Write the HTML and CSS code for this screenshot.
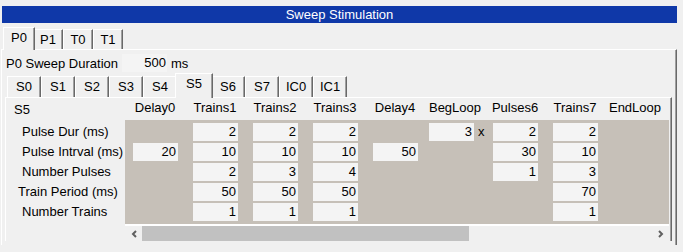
FILE: index.html
```html
<!DOCTYPE html>
<html>
<head>
<meta charset="utf-8">
<link rel="stylesheet" href="styles.css">
</head>
<body>
<div class="titlebar">Sweep Stimulation</div>
<div class="tabs ptabs">
  <div class="tab sel">P0</div>
  <div class="tab">P1</div>
  <div class="tab">T0</div>
  <div class="tab">T1</div>
</div>
<div class="ppanel">
  <div class="durrow">
    <span class="durlabel">P0 Sweep Duration</span>
    <span class="durbox">500</span>
    <span class="unit">ms</span>
  </div>
  <div class="tabs stabs">
    <div class="tab">S0</div>
    <div class="tab">S1</div>
    <div class="tab">S2</div>
    <div class="tab">S3</div>
    <div class="tab">S4</div>
    <div class="tab sel">S5</div>
    <div class="tab">S6</div>
    <div class="tab">S7</div>
    <div class="tab">IC0</div>
    <div class="tab">IC1</div>
  </div>
  <div class="spanel">
    <div class="headrow">
      <div class="slabel">S5</div>
      <div class="heads">
        <div>Delay0</div><div>Trains1</div><div>Trains2</div><div>Trains3</div><div>Delay4</div><div>BegLoop</div><div>Pulses6</div><div>Trains7</div><div>EndLoop</div>
      </div>
    </div>
    <div class="bodyrow">
      <div class="labels">
        <div>Pulse Dur (ms)</div>
        <div>Pulse Intrval (ms)</div>
        <div>Number Pulses</div>
        <div class="tp">Train Period (ms)</div>
        <div>Number Trains</div>
      </div>
      <div class="band">
        <div></div><div class="cell">2</div><div class="cell">2</div><div class="cell">2</div><div></div><div class="loop"><div class="cell">3</div><span class="x">x</span></div><div class="cell">2</div><div class="cell">2</div><div></div>
        <div class="cell">20</div><div class="cell">10</div><div class="cell">10</div><div class="cell">10</div><div class="cell">50</div><div></div><div class="cell">30</div><div class="cell">10</div><div></div>
        <div></div><div class="cell">2</div><div class="cell">3</div><div class="cell">4</div><div></div><div></div><div class="cell">1</div><div class="cell">3</div><div></div>
        <div></div><div class="cell">50</div><div class="cell">50</div><div class="cell">50</div><div></div><div></div><div></div><div class="cell">70</div><div></div>
        <div></div><div class="cell">1</div><div class="cell">1</div><div class="cell">1</div><div></div><div></div><div></div><div class="cell">1</div><div></div>
      </div>
    </div>
    <div class="hscroll">
      <div class="arrow"><svg width="6" height="8" viewBox="0 0 6 8"><polyline points="5,1 2,4 5,7" fill="none" stroke="#606060" stroke-width="2"/></svg></div>
      <div class="thumb"></div>
      <div class="track"></div>
      <div class="arrow"><svg width="6" height="8" viewBox="0 0 6 8"><polyline points="1,1 4,4 1,7" fill="none" stroke="#606060" stroke-width="2"/></svg></div>
    </div>
  </div>
</div>
</body>
</html>
```
FILE: styles.css
```css
body {
  margin: 0;
  background: #f0f0f0;
  font: 13px "Liberation Sans", Arial, sans-serif;
  color: #000;
}
.titlebar {
  margin: 6px 6px 0 2px;
  height: 17px;
  line-height: 17px;
  background: #0f38a8;
  color: #fff;
  text-align: center;
}
.tabs {
  display: flex;
  align-items: flex-end;
}
.tab {
  box-sizing: border-box;
  height: 20px;
  width: 30px;
  padding-top: 2px;
  line-height: 15px;
  text-align: center;
  border-top: 1px solid #fff;
  border-left: 1px solid #fff;
  border-right: 1px solid #696969;
  box-shadow: inset -1px 0 #a0a0a0;
  background: #f0f0f0;
}
.tab.sel {
  position: relative;
  z-index: 1;
  margin-bottom: -1px;
}
.ptabs {
  margin-top: 4px;
  padding-left: 3px;
  height: 22px;
}
.ptabs .sel {
  height: 23px;
  width: 32px;
  margin-right: -2px;
}
.ppanel {
  margin: 0 6px 0 1px;
  border-top: 1px solid #fff;
  border-left: 1px solid #fff;
  border-right: 1px solid #696969;
  box-shadow: inset -1px 0 #a0a0a0;
  padding-bottom: 4px;
}
.durrow {
  display: flex;
  align-items: center;
  height: 18px;
  margin-top: 4px;
  padding-left: 4px;
}
.durlabel {
  width: 116px;
}
.durbox {
  box-sizing: border-box;
  width: 45px;
  height: 18px;
  line-height: 18px;
  text-align: right;
  padding-right: 1px;
  background: #f4f4f4;
}
.unit {
  margin-left: 4px;
}
.stabs {
  margin-top: 1px;
  padding-left: 5px;
  height: 24px;
}
.stabs .tab {
  width: 34px;
  height: 21px;
}
.stabs .tab.sel {
  width: 38px;
  height: 25px;
  margin: 0 -2px -1px;
}
.spanel {
  margin: 0 4px 0 3px;
  border-top: 1px solid #fff;
  border-left: 1px solid #fff;
  border-right: 1px solid #696969;
  box-shadow: inset -1px 0 #a0a0a0;
}
.headrow {
  display: flex;
  height: 22px;
}
.slabel {
  box-sizing: border-box;
  width: 119px;
  padding: 4px 0 0 8px;
  line-height: 15px;
}
.heads {
  display: grid;
  grid-template-columns: repeat(9, 60px);
  padding-top: 2px;
  line-height: 15px;
  text-align: center;
}
.bodyrow {
  display: flex;
}
.labels {
  box-sizing: border-box;
  width: 119px;
  padding-top: 3px;
  display: flex;
  flex-direction: column;
  gap: 2px;
}
.labels div {
  height: 18px;
  line-height: 18px;
  padding-left: 16px;
}
.labels .tp {
  padding-left: 12px;
}
.band {
  box-sizing: border-box;
  width: 544px;
  background: #c6c0b8;
  padding: 3px 0 3px 8px;
  display: grid;
  grid-template-columns: repeat(9, 60px);
  grid-auto-rows: 18px;
  row-gap: 2px;
}
.cell {
  box-sizing: border-box;
  width: 45px;
  height: 18px;
  line-height: 18px;
  background: #f4f4f4;
  text-align: right;
  padding-right: 2px;
}
.loop {
  display: flex;
  margin-left: -4px;
}
.loop .x {
  margin-left: 4px;
  line-height: 18px;
}
.hscroll {
  display: flex;
  margin-left: 119px;
  width: 544px;
  height: 15px;
  border-top: 2px solid #fff;
}
.arrow {
  width: 17px;
  display: flex;
  align-items: center;
  justify-content: center;
}
.thumb {
  width: 327px;
  background: #c1c1c1;
}
.track {
  flex: 1;
}
```
